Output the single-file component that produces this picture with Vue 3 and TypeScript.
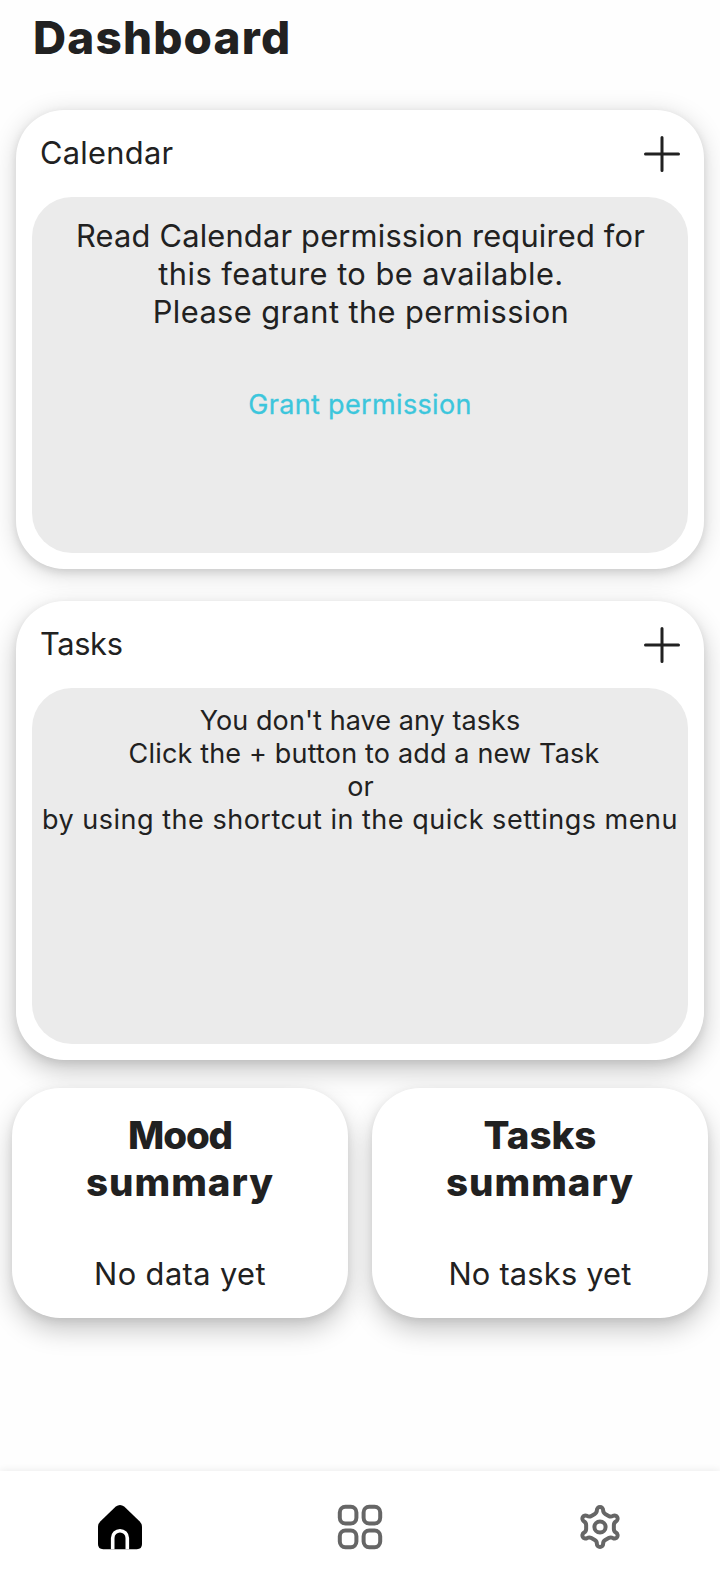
<script setup lang="ts">
interface Line {
  text: string
  fit: string
}

const calendarLines: Line[] = [
  { text: 'Read Calendar permission required for', fit: 'l1' },
  { text: 'this feature to be available.', fit: 'l2' },
  { text: 'Please grant the permission', fit: 'l3' },
]

const taskLines: Line[] = [
  { text: "You don't have any tasks", fit: 't1' },
  { text: 'Click the + button to add a new Task', fit: 't2' },
  { text: 'or', fit: 't3' },
  { text: 'by using the shortcut in the quick settings menu', fit: 't4' },
]

const summaries = [
  { id: 'mood', first: 'Mood', second: 'summary', note: 'No data yet' },
  { id: 'task', first: 'Tasks', second: 'summary', note: 'No tasks yet' },
]

// Six rounded teeth, each the same outline turned by 60 degrees.
function gearPath(): string {
  const pt = (x: number, y: number, turn: number): string => {
    const a = (turn * Math.PI) / 3
    const px = x * Math.cos(a) - y * Math.sin(a)
    const py = x * Math.sin(a) + y * Math.cos(a)
    return `${(px + 24).toFixed(2)} ${(py + 24).toFixed(2)}`
  }
  let d = `M${pt(-3.1, -16.9, 0)}`
  for (let i = 0; i < 6; i++) {
    d += `A3.1 3.1 0 0 1 ${pt(3.1, -16.9, i)}`
    d += `Q${pt(3.1, -14.2, i)} ${pt(5.2, -13, i)}`
    d += `L${pt(-5.2, -13, i + 1)}`
    d += `Q${pt(-3.1, -14.2, i + 1)} ${pt(-3.1, -16.9, i + 1)}`
  }
  return d + 'Z'
}
const gear = gearPath()
</script>

<template>
  <div class="screen">
    <header class="top"><h1>Dashboard</h1></header>

    <main>
      <section class="card">
        <div class="card-head">
          <h2 class="cal">Calendar</h2>
          <svg class="plus" viewBox="0 0 36 36"><path d="M18 1.5v33M1.5 18h33" /></svg>
        </div>
        <div class="panel">
          <p v-for="l in calendarLines" :key="l.fit" class="line big"><span :class="l.fit">{{ l.text }}</span></p>
          <a class="grant">Grant permission</a>
        </div>
      </section>

      <section class="card second">
        <div class="card-head">
          <h2 class="tasks">Tasks</h2>
          <svg class="plus" viewBox="0 0 36 36"><path d="M18 1.5v33M1.5 18h33" /></svg>
        </div>
        <div class="panel list">
          <p v-for="l in taskLines" :key="l.fit" class="line"><span :class="l.fit">{{ l.text }}</span></p>
        </div>
      </section>

      <div class="summaries">
        <section v-for="s in summaries" :key="s.id" class="summary" :class="s.id">
          <h3><span class="first">{{ s.first }}</span><span class="word">{{ s.second }}</span></h3>
          <p>{{ s.note }}</p>
        </section>
      </div>
    </main>

    <nav>
      <a>
        <svg viewBox="0 0 48 48">
          <path d="M19.8 3.6Q24 .2 28.2 3.6L43.5 18.2Q46 20.7 46 24V41Q46 46.2 40.8 46.2H7.2Q2 46.2 2 41V24Q2 20.7 4.5 18.2Z" />
          <path class="door" d="M16.7 46.2V35a7.3 7.3 0 0 1 14.6 0V46.2" />
        </svg>
      </a>
      <a>
        <svg class="outline" viewBox="0 0 48 48">
          <rect x="3.8" y="3.8" width="16.6" height="16.6" rx="5.6" />
          <rect x="27.6" y="3.8" width="16.6" height="16.6" rx="5.6" />
          <rect x="3.8" y="27.6" width="16.6" height="16.6" rx="5.6" />
          <rect x="27.6" y="27.6" width="16.6" height="16.6" rx="5.6" />
        </svg>
      </a>
      <a>
        <svg class="outline" viewBox="0 0 48 48">
          <path :d="gear" />
          <circle cx="24" cy="24" r="5.6" />
        </svg>
      </a>
    </nav>
  </div>
</template>

<style>
body {
  background: #fefefe;
}
</style>

<style scoped>
.screen {
  width: 720px;
  height: 1582px;
  display: flex;
  flex-direction: column;
  overflow: hidden;
  background: #fefefe;
  color: #212121;
  font-family: Inter, Roboto, sans-serif;
}
h1,
h2,
h3,
p {
  margin: 0;
}
.top {
  height: 110px;
  box-sizing: border-box;
  padding: 10px 33px 0;
}
h1 {
  font-size: 45.8px;
  line-height: 56px;
  font-weight: 800;
  letter-spacing: 1.2px;
}
main {
  flex: 1;
}
.card {
  height: 459px;
  box-sizing: border-box;
  margin: 0 16px 32px;
  padding: 0 16px 16px;
  display: flex;
  flex-direction: column;
  border-radius: 48px;
  background: #fff;
  box-shadow: 0 4px 24px rgba(0, 0, 0, 0.17), 0 3px 8px rgba(0, 0, 0, 0.1);
}
.second {
  margin-bottom: 28px;
  box-shadow: 0 10px 26px rgba(0, 0, 0, 0.23), 0 3px 8px rgba(0, 0, 0, 0.08);
}
.card-head {
  height: 87px;
  padding: 0 8px;
  display: flex;
  align-items: center;
  justify-content: space-between;
}
h2 {
  font-size: 30.8px;
  line-height: 38px;
  font-weight: 400;
  padding-bottom: 2px;
}
.cal {
  letter-spacing: 0.28px;
}
.tasks {
  letter-spacing: -0.35px;
}
.plus {
  width: 36px;
  height: 36px;
  fill: none;
  stroke: #212121;
  stroke-width: 3;
  stroke-linecap: round;
}
.panel {
  flex: 1;
  padding-top: 20px;
  border-radius: 40px;
  background: #ebebeb;
  display: flex;
  flex-direction: column;
  align-items: center;
}
.list {
  padding-top: 16px;
}
.line {
  font-size: 27px;
  line-height: 33px;
  white-space: nowrap;
}
.big {
  font-size: 30.8px;
  line-height: 38px;
}
.l1 {
  letter-spacing: 0.2px;
  padding-left: 1px;
}
.l2 {
  letter-spacing: 0.47px;
  padding-left: 2px;
}
.l3 {
  letter-spacing: 0.42px;
  padding-left: 2px;
}
.t1 {
  letter-spacing: 0.07px;
}
.t2 {
  letter-spacing: 0.17px;
  padding-left: 8px;
}
.t3 {
  padding-left: 1px;
}
.t4 {
  letter-spacing: 0.51px;
}
.grant {
  margin-top: 57px;
  font-size: 27px;
  line-height: 33px;
  letter-spacing: 0.35px;
  color: #3cc6dc;
  -webkit-text-stroke: 0.3px #3cc6dc;
}
.summaries {
  display: flex;
  gap: 24px;
  padding: 0 12px;
}
.summary {
  flex: 1;
  height: 230px;
  box-sizing: border-box;
  padding-top: 23.5px;
  border-radius: 48px;
  background: #fff;
  text-align: center;
  box-shadow: 0 12px 26px rgba(0, 0, 0, 0.22), 0 3px 8px rgba(0, 0, 0, 0.08);
}
h3 {
  display: flex;
  flex-direction: column;
  align-items: center;
  font-size: 38.5px;
  line-height: 47px;
  font-weight: 800;
}
.mood .first {
  letter-spacing: -1.1px;
}
.word {
  letter-spacing: 1px;
}
.summary p {
  margin-top: 49px;
  font-size: 30.8px;
  line-height: 38px;
}
.mood p {
  letter-spacing: 0.4px;
}
.task p {
  letter-spacing: 0.2px;
}
nav {
  height: 111px;
  display: flex;
  background: #fff;
  box-shadow: 0 0 8px rgba(0, 0, 0, 0.09);
}
nav a {
  flex: 1;
  display: flex;
  align-items: center;
  justify-content: center;
}
nav svg {
  width: 48px;
  height: 48px;
}
.door {
  fill: none;
  stroke: #fff;
  stroke-width: 3.6;
}
.outline {
  fill: none;
  stroke: #666;
  stroke-width: 4;
  stroke-linejoin: round;
}
</style>
